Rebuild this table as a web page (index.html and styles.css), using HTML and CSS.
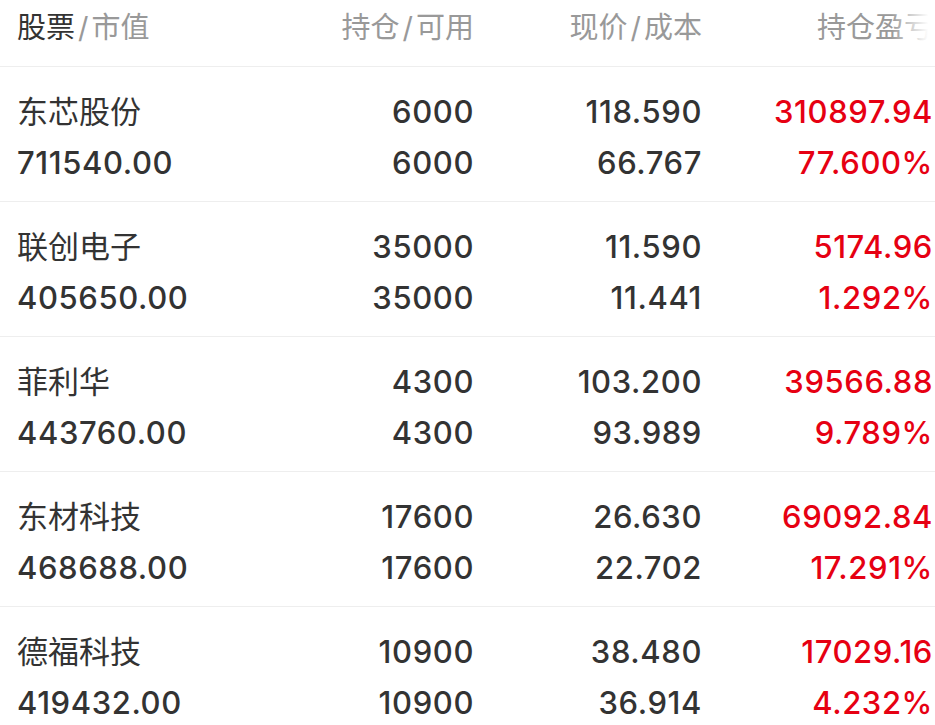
FILE: index.html
```html
<!DOCTYPE html>
<html lang="zh-CN">
<head>
<meta charset="utf-8">
<title>持仓</title>
<link rel="stylesheet" href="styles.css">
</head>
<body>
<div class="table">
  <div class="head">
    <div class="cell left"><span class="strong">股票</span><span class="sep">/</span>市值</div>
    <div class="cell">持仓<span class="sep">/</span>可用</div>
    <div class="cell">现价<span class="sep">/</span>成本</div>
    <div class="cell">持仓盈亏</div>
  </div>

  <div class="row">
    <div class="cell left"><div class="name">东芯股份</div><div class="num">711540.00</div></div>
    <div class="cell"><div class="num">6000</div><div class="num">6000</div></div>
    <div class="cell"><div class="num">118.590</div><div class="num">66.767</div></div>
    <div class="cell up"><div class="num">310897.94</div><div class="num">77.600%</div></div>
  </div>

  <div class="row">
    <div class="cell left"><div class="name">联创电子</div><div class="num">405650.00</div></div>
    <div class="cell"><div class="num">35000</div><div class="num">35000</div></div>
    <div class="cell"><div class="num">11.590</div><div class="num">11.441</div></div>
    <div class="cell up"><div class="num">5174.96</div><div class="num">1.292%</div></div>
  </div>

  <div class="row">
    <div class="cell left"><div class="name">菲利华</div><div class="num">443760.00</div></div>
    <div class="cell"><div class="num">4300</div><div class="num">4300</div></div>
    <div class="cell"><div class="num">103.200</div><div class="num">93.989</div></div>
    <div class="cell up"><div class="num">39566.88</div><div class="num">9.789%</div></div>
  </div>

  <div class="row">
    <div class="cell left"><div class="name">东材科技</div><div class="num">468688.00</div></div>
    <div class="cell"><div class="num">17600</div><div class="num">17600</div></div>
    <div class="cell"><div class="num">26.630</div><div class="num">22.702</div></div>
    <div class="cell up"><div class="num">69092.84</div><div class="num">17.291%</div></div>
  </div>

  <div class="row">
    <div class="cell left"><div class="name">德福科技</div><div class="num">419432.00</div></div>
    <div class="cell"><div class="num">10900</div><div class="num">10900</div></div>
    <div class="cell"><div class="num">38.480</div><div class="num">36.914</div></div>
    <div class="cell up"><div class="num">17029.16</div><div class="num">4.232%</div></div>
  </div>
</div>
</body>
</html>
```

FILE: styles.css
```css
html, body {
  margin: 0;
  padding: 0;
  background: #ffffff;
}

body {
  font-family: Inter, "Noto Sans CJK SC", sans-serif;
  color: #333333;
  width: 935px;
  height: 725px;
  overflow: hidden;
}

.table {
  display: flex;
  flex-direction: column;
}

.head,
.row {
  display: grid;
  grid-template-columns: 227px 230px 228px 231px;
  padding: 0 2px 0 17px;
  border-bottom: 1px solid #eeeeee;
}

.head {
  position: relative;
  height: 67px;
  box-sizing: border-box;
  padding-top: 8px;
  font-size: 29px;
  line-height: 40px;
  color: #999999;
}

.head::after {
  content: "";
  position: absolute;
  top: 0;
  right: 0;
  width: 44px;
  height: 60px;
  background: linear-gradient(to right, rgba(255,255,255,0), #ffffff 85%);
}

.head .strong {
  color: #333333;
}

.head .sep {
  margin: 0 3px;
}

.cell {
  text-align: right;
}

.cell.left {
  text-align: left;
}

.row {
  height: 135px;
  box-sizing: border-box;
  padding-top: 19px;
  font-size: 31px;
  line-height: 51px;
}

.name {
  font-weight: 400;
  height: 51px;
}

.num {
  font-weight: 500;
  letter-spacing: 0.6px;
  height: 51px;
}

.up {
  color: #e60012;
}
```
